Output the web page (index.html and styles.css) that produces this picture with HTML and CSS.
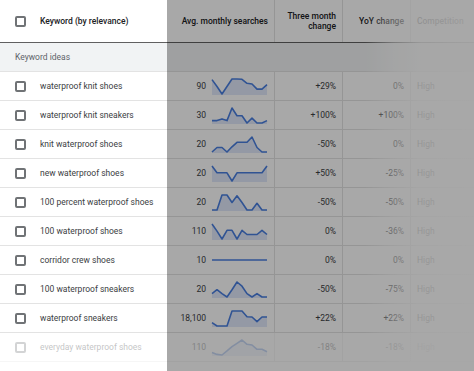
FILE: index.html
```html
<!DOCTYPE html>
<html lang="en">
<head>
    <meta charset="UTF-8">
    <meta name="viewport" content="width=device-width, initial-scale=1.0">
    <title>Keyword Ideas</title>
    <link rel="stylesheet" href="styles.css">
</head>
<body>
    <div class="page">
        <div class="table" id="table">
            <div class="row head">
                <div class="cell check"><span class="box"></span></div>
                <div class="cell keyword">Keyword (by relevance)</div>
                <div class="cell num">Avg. monthly searches</div>
                <div class="cell num sep">Three month<br>change</div>
                <div class="cell num sep">YoY change</div>
                <div class="cell comp sep">Competition</div>
            </div>
            <div class="row group">
                <div class="cell group-label">Keyword ideas</div>
            </div>
        </div>
        <div class="fade-right"></div>
        <div class="dim"></div>
    </div>

    <script>
        const keywords = [
            { name: 'waterproof knit shoes', searches: '90', three: '+29%', yoy: '0%', trend: [0.04, 0.5, 1, 0.5, 0, 0, 0.02, 0.29, 0.33, 0.67, 0.67, 0.38] },
            { name: 'waterproof knit sneakers', searches: '30', three: '+100%', yoy: '+100%', trend: [0.84, 0.84, 0.73, 0.84, 0, 0.51, 0.51, 1, 0.67, 1, 1, 0.84] },
            { name: 'knit waterproof shoes', searches: '20', three: '-50%', yoy: '0%', trend: [1, 0.7, 0.7, 1, 0.65, 0.35, 0.35, 0.35, 0, 0.7, 1, 1] },
            { name: 'new waterproof shoes', searches: '20', three: '+50%', yoy: '-25%', trend: [0, 0.45, 0.45, 0.45, 1, 0.45, 0.45, 0.45, 0.45, 0.45, 0.45, 0] },
            { name: '100 percent waterproof shoes', searches: '20', three: '-50%', yoy: '-50%', trend: [1, 1, 0, 0, 0.5, 0.05, 0.5, 1, 1, 0.55, 1, 1] },
            { name: '100 waterproof shoes', searches: '110', three: '0%', yoy: '-36%', trend: [0, 0.47, 1, 0.42, 0.42, 1, 0.42, 0.7, 0.7, 0.7, 0.42, 0.7] },
            { name: 'corridor crew shoes', searches: '10', three: '0%', yoy: '0%', trend: null },
            { name: '100 waterproof sneakers', searches: '20', three: '-50%', yoy: '-75%', trend: [0.77, 0.51, 0.77, 1, 0.51, 0, 0.28, 0.77, 1, 0.77, 1, 1] },
            { name: 'waterproof sneakers', searches: '18,100', three: '+22%', yoy: '+22%', trend: [0.78, 1, 1, 1, 0, 0, 0, 0.38, 0.4, 0.71, 0.4, 0.4] },
            { name: 'everyday waterproof shoes', searches: '110', three: '-18%', yoy: '-18%', trend: [0.84, 0.96, 1, 0.73, 0.44, 0.22, 0, 0.29, 0.33, 0.62, 0.62, 0.78], faded: true }
        ];

        function sparkline(trend) {
            if (!trend) {
                return `<svg class="spark" viewBox="0 0 57 18"><line x1="1" y1="9" x2="56" y2="9" class="line"/></svg>`;
            }
            const pts = trend.map((v, i) => `${1 + i * 5},${(2 + v * 15).toFixed(1)}`);
            return `
                <svg class="spark" viewBox="0 0 57 18">
                    <path class="area" d="M${pts.join(' L')} L56,18 L1,18 Z"/>
                    <polyline class="line" points="${pts.join(' ')}"/>
                </svg>`;
        }

        const table = document.getElementById('table');
        table.insertAdjacentHTML('beforeend', keywords.map(k => `
            <div class="row${k.faded ? ' faded' : ''}">
                <div class="cell check"><span class="box"></span></div>
                <div class="cell keyword">${k.name}</div>
                <div class="cell num searches"><span>${k.searches}</span>${sparkline(k.trend)}</div>
                <div class="cell num sep">${k.three}</div>
                <div class="cell num sep">${k.yoy}</div>
                <div class="cell comp sep">High</div>
            </div>
        `).join(''));
    </script>
</body>
</html>
```

FILE: styles.css
```css
body {
    margin: 0;
    font-family: Roboto, "Liberation Sans", sans-serif;
    background: #fff;
}
.page {
    position: relative;
    width: 474px;
    height: 371px;
    overflow: hidden;
}
.table {
    display: flex;
    flex-direction: column;
}
.row {
    display: grid;
    grid-template-columns: 40px 127px 107px 68px 68px 1fr;
    height: 29px;
    border-bottom: 1px solid #e3e3e3;
    box-sizing: border-box;
    font-size: 8.5px;
    color: #3c4043;
}
.row.head {
    height: 43px;
    border-bottom: 1px solid #606060;
    font-weight: 500;
    color: #202124;
    line-height: 10px;
}
.row.group {
    background: #f1f3f4;
    grid-template-columns: 1fr;
}
.row.faded {
    opacity: .3;
}
.cell {
    display: flex;
    align-items: center;
    box-sizing: border-box;
    white-space: nowrap;
}
.check {
    padding-left: 15px;
}
.box {
    width: 11px;
    height: 11px;
    border: 2px solid #707376;
    border-radius: 2px;
    box-sizing: border-box;
}
.keyword {
    padding-left: 0;
}
.group-label {
    padding-left: 15px;
    color: #5f6368;
}
.num {
    justify-content: flex-end;
    text-align: right;
    padding-right: 6px;
}
.comp {
    padding-left: 6px;
}
.sep {
    border-left: 1px solid #e3e3e3;
}
.searches {
    gap: 5px;
}
.spark {
    width: 57px;
    height: 18px;
    overflow: visible;
}
.spark .area {
    fill: #e1e9fb;
}
.spark .line {
    fill: none;
    stroke: #4a7fe0;
    stroke-width: 1.6;
    stroke-linejoin: round;
}
.fade-right {
    position: absolute;
    left: 365px;
    top: 0;
    right: 0;
    bottom: 0;
    background: linear-gradient(to right, rgba(255,255,255,0) 0, rgba(255,255,255,.55) 28px, rgba(255,255,255,.85) 55px, rgba(255,255,255,.93) 100%);
}
.dim {
    position: absolute;
    left: 167px;
    top: 0;
    right: 0;
    bottom: 0;
    background: rgba(0,0,0,.34);
}
```
